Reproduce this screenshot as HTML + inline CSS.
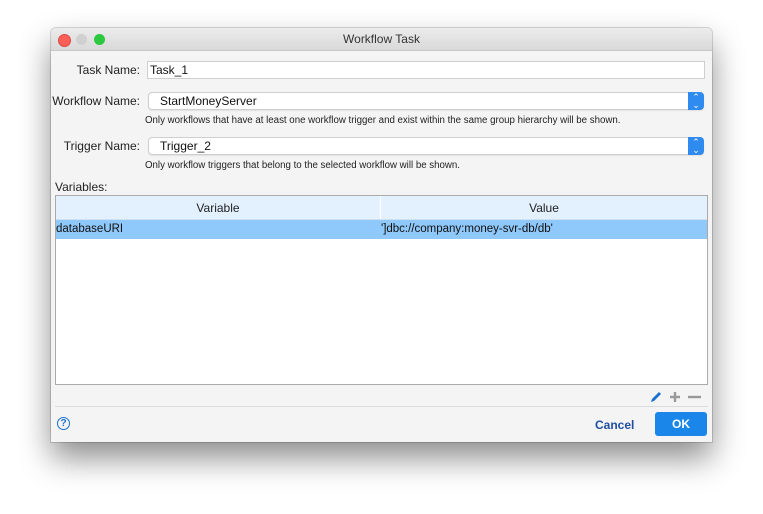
<!DOCTYPE html>
<html><head><style>
body{margin:0;width:763px;height:514px;background:#fff;font-family:"Liberation Sans",sans-serif;position:relative;overflow:hidden}
.win{position:absolute;left:51px;top:28px;width:661px;height:414px;background:#f4f4f4;border-radius:5px 5px 0 0;box-shadow:0 16px 32px rgba(0,0,0,.45),0 0 0 1px rgba(0,0,0,.15);overflow:hidden}
.tb{position:absolute;left:0;top:0;width:661px;height:22px;background:linear-gradient(#ececec,#d9d9d9);border-bottom:1px solid #c8c8c8;text-align:center;font-size:12px;line-height:22px;color:#333}
.dot{position:absolute;top:6px;width:11px;height:11px;border-radius:50%}
.a{position:absolute;font-size:12px;color:#222;white-space:nowrap;text-align:right;width:89px;left:0}
.s{position:absolute;font-size:9.7px;color:#222;white-space:nowrap}
.f{position:absolute;background:#fff;border:1px solid #cfcfcf;box-sizing:border-box;font-size:12px;line-height:16px;padding-left:2px;color:#111}
.c{position:absolute;background:#fff;border:1px solid #cfcfcf;border-radius:4px;box-sizing:border-box;font-size:12px;line-height:16px;padding-left:11px;color:#111;box-shadow:0 1px 1px rgba(0,0,0,.08)}
.ar{position:absolute;right:-1px;top:-1px;width:16px;height:18px;background:#2f8bf0;border-radius:0 4px 4px 0;color:#fff;font-size:9px;line-height:8px;text-align:center;padding-top:1px;box-sizing:border-box}
</style></head><body>
<div class="win">
<div class="tb">Workflow Task</div>
<div class="dot" style="left:7px;background:#fc5f57;border:0.5px solid #de4a42"></div>
<div class="dot" style="left:25px;background:#d0d0d0"></div>
<div class="dot" style="left:43px;background:#2bc840"></div>

<div class="a" style="top:35px">Task Name:</div>
<div class="f" style="left:96px;top:33px;width:558px;height:18px">Task_1</div>

<div class="a" style="top:66px">Workflow Name:</div>
<div class="c" style="left:97px;top:64px;width:556px;height:18px">StartMoneyServer<div class="ar">⌃<br>⌄</div></div>
<div class="s" style="left:94px;top:87px">Only workflows that have at least one workflow trigger and exist within the same group hierarchy will be shown.</div>

<div class="a" style="top:111px">Trigger Name:</div>
<div class="c" style="left:97px;top:109px;width:556px;height:18px">Trigger_2<div class="ar">⌃<br>⌄</div></div>
<div class="s" style="left:94px;top:132px">Only workflow triggers that belong to the selected workflow will be shown.</div>

<div class="a" style="top:152px;text-align:left;left:4px">Variables:</div>
<div style="position:absolute;left:4px;top:167px;width:653px;height:190px;background:#fff;border:1px solid #aaa;box-sizing:border-box">
 <div style="position:absolute;left:0;top:0;width:651px;height:23px;background:#e3f0fd;border-bottom:1px solid #cfe0f0;font-size:12px;line-height:24px;color:#222">
  <div style="position:absolute;left:0;width:324px;text-align:center">Variable</div>
  <div style="position:absolute;left:324px;top:0;width:1px;height:23px;background:#fff"></div>
  <div style="position:absolute;left:325px;width:326px;text-align:center">Value</div>
 </div>
 <div style="position:absolute;left:0;top:24px;width:651px;height:19px;background:#8fc8fa;font-size:11.5px;line-height:19px;color:#111">
  <div style="position:absolute;left:0">databaseURI</div>
  <div style="position:absolute;left:325px">']dbc://company:money-svr-db/db'</div>
 </div>
</div>

<svg style="position:absolute;left:598px;top:362px" width="60" height="14">
<path d="M2 12 L3 9 L10 2 L12 4 L5 11 Z" fill="#1a6fd0"/>
<path d="M26 2 V12 M21 7 H31" stroke="#999" stroke-width="2.4"/>
<path d="M39 7 H52" stroke="#999" stroke-width="2.4"/>
</svg>
<div style="position:absolute;left:4px;top:378px;width:653px;height:1px;background:#dcdcdc"></div>

<div style="position:absolute;left:6px;top:389px;width:11px;height:11px;border:1.5px solid #1a6fd0;border-radius:50%;font-size:10px;font-weight:bold;line-height:11px;text-align:center;color:#1a6fd0">?</div>
<div style="position:absolute;left:544px;top:390px;font-size:12px;font-weight:bold;color:#1f4fa0">Cancel</div>
<div style="position:absolute;left:604px;top:384px;width:52px;height:24px;background:#1a86ea;border-radius:3px;color:#fff;font-size:12px;font-weight:bold;line-height:24px;text-align:center">OK</div>
</div>
</body></html>
